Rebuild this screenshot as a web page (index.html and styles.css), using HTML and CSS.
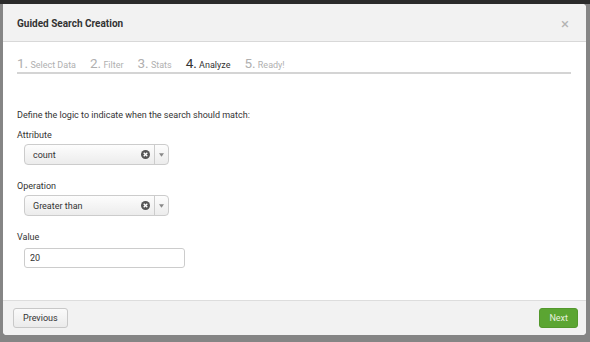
FILE: index.html
```html
<!DOCTYPE html>
<html lang="en">
<head>
    <meta charset="UTF-8">
    <title>Guided Search Creation</title>
    <link rel="stylesheet" href="styles.css">
</head>
<body>
    <div class="backdrop-top"></div>
    <div class="modal">
        <div class="modal-header">
            <span class="modal-title">Guided Search Creation</span>
            <span class="close">&times;</span>
        </div>
        <div class="modal-body">
            <!-- wizard steps -->
            <div class="steps">
                <span class="step"><b>1.</b> Select Data</span>
                <span class="step"><b>2.</b> Filter</span>
                <span class="step"><b>3.</b> Stats</span>
                <span class="step active"><b>4.</b> Analyze</span>
                <span class="step"><b>5.</b> Ready!</span>
            </div>

            <p class="intro">Define the logic to indicate when the search should match:</p>

            <div class="field">
                <label>Attribute</label>
                <div class="select">
                    <span class="select-value">count</span>
                    <span class="clear"><svg width="9" height="9" viewBox="0 0 10 10"><circle cx="5" cy="5" r="5" fill="#555"/><path d="M3 3L7 7M7 3L3 7" stroke="#fff" stroke-width="1.5"/></svg></span>
                    <span class="caret"><svg width="5" height="4" viewBox="0 0 6 4"><path d="M0 0H6L3 4Z" fill="#888"/></svg></span>
                </div>
            </div>

            <div class="field">
                <label>Operation</label>
                <div class="select">
                    <span class="select-value">Greater than</span>
                    <span class="clear"><svg width="9" height="9" viewBox="0 0 10 10"><circle cx="5" cy="5" r="5" fill="#555"/><path d="M3 3L7 7M7 3L3 7" stroke="#fff" stroke-width="1.5"/></svg></span>
                    <span class="caret"><svg width="5" height="4" viewBox="0 0 6 4"><path d="M0 0H6L3 4Z" fill="#888"/></svg></span>
                </div>
            </div>

            <div class="field">
                <label>Value</label>
                <input class="text-input" type="text" value="20">
            </div>
        </div>
        <div class="modal-footer">
            <button class="btn">Previous</button>
            <button class="btn btn-primary">Next</button>
        </div>
    </div>
</body>
</html>
```

FILE: styles.css
```css
body {
    margin: 0;
    height: 342px;
    background-color: #858585;
    font-family: Roboto, "Liberation Sans", sans-serif;
    color: #333;
    overflow: hidden;
}
.backdrop-top {
    height: 4px;
    background-color: #2b2b2b;
}
.modal {
    margin-left: 3px;
    width: 583px;
    height: 331px;
    background-color: #fff;
    border-radius: 0 4px 4px 4px;
    display: flex;
    flex-direction: column;
    overflow: hidden;
}
.modal-header {
    height: 37px;
    background-color: #f2f2f2;
    border-bottom: 1px solid #d8d8d8;
    display: flex;
    align-items: center;
    justify-content: space-between;
    padding: 0 17px 0 14px;
}
.modal-title {
    font-size: 10px;
    font-weight: bold;
    color: #333;
    padding-top: 1px;
}
.close {
    font-size: 15px;
    color: #b4b4b4;
    padding-top: 3px;
}
.modal-body {
    flex: 1;
    padding: 11px 14px 0 14px;
}
.steps {
    display: flex;
    width: 554px;
    border-bottom: 2px solid #d4d4d4;
    height: 19px;
    align-items: flex-end;
}
.step {
    font-size: 9px;
    color: #b0b0b0;
    margin-right: 14px;
    padding-bottom: 1px;
}
.step b {
    font-weight: normal;
    font-size: 13.5px;
}
.step.active {
    color: #333;
}
.intro {
    font-size: 9px;
    margin: 36px 0 10px 0;
}
.field label {
    display: block;
    font-size: 9px;
    margin-bottom: 4px;
}
.field {
    margin-bottom: 16px;
}
.select {
    margin-left: 7px;
    width: 145px;
    height: 21px;
    box-sizing: border-box;
    border: 1px solid #ccc;
    border-radius: 4px;
    background: linear-gradient(#fdfdfd, #ececec);
    display: flex;
    align-items: center;
    font-size: 9px;
}
.select-value {
    flex: 1;
    padding-left: 8px;
}
.clear {
    display: flex;
    padding-right: 4px;
}
.caret {
    width: 13px;
    height: 100%;
    border-left: 1px solid #ccc;
    display: flex;
    align-items: center;
    justify-content: center;
}
.text-input {
    margin-left: 7px;
    width: 161px;
    height: 20px;
    box-sizing: border-box;
    border: 1px solid #ccc;
    border-radius: 3px;
    padding: 0 5px;
    font-family: Roboto, "Liberation Sans", sans-serif;
    font-size: 9px;
    color: #333;
}
.modal-footer {
    height: 34px;
    background-color: #f2f2f2;
    border-top: 1px solid #ddd;
    display: flex;
    align-items: center;
    justify-content: space-between;
    padding: 0 8px 0 10px;
}
.btn {
    height: 20px;
    padding: 0 9px;
    font-family: Roboto, "Liberation Sans", sans-serif;
    font-size: 9px;
    color: #333;
    border: 1px solid #c8c8c8;
    border-radius: 3px;
    background: linear-gradient(#fafafa, #ebebeb);
}
.btn-primary {
    color: #e6f0df;
    background: #5ba532;
    border-color: #53982c;
}
```
